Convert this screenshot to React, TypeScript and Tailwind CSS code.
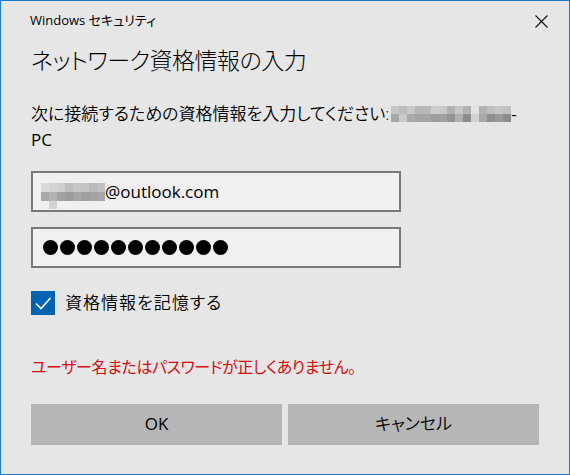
const topRow = ["#c6c6c6", "#bcbcbc", "#c8c8c8", "#b6b6b6", "#b9b9b9", "#cdcdcd", "#c9c9c9", "#b1b1b1", "#c7c7c7", "#b3b3b3", "#e2e2e2", "#b3b3b3", "#bfbfbf", "#c6c6c6", "#c1c1c1"];
const bottomRow = ["#a6a6a6", "#c9c9c9", "#a9a9a9", "#a4a4a4", "#a6a6a6", "#9d9d9d", "#a1a1a1", "#939393", "#b1b1b1", "#8b8b8b", "#d2d2d2", "#a9a9a9", "#8f8f8f", "#9b9b9b", "#8d8d8d"];

const emailTop = ["#dadada", "#d3d3d3", "#cfcfcf", "#bdbdbd", "#c6c6c6", "#c4c4c4", "#bababa", "#c2c2c2"];
const emailBottom = ["#a9a9a9", "#b4b4b4", "#a2a2a2", "#9b9b9b", "#a6a6a6", "#9e9e9e", "#a3a3a3", "#a7a7a7"];

const font = "font-['Open_Sans','Noto_Sans_CJK_JP',sans-serif] [font-feature-settings:'palt'] font-[350]";
const latin = "font-['Open_Sans',sans-serif] font-[380]";

const Blur = ({ top, bottom, w, h }: { top: string[]; bottom: string[]; w: number; h: number }) => (
  <svg width={top.length * w} height={h * 2} className="block">
    {top.map((c, i) => (
      <rect key={"t" + i} x={i * w} y={0} width={w} height={h} fill={c} />
    ))}
    {bottom.map((c, i) => (
      <rect key={"b" + i} x={i * w} y={h} width={w} height={h} fill={c} />
    ))}
  </svg>
);

export default function App() {
  return (
    <div className={`w-[570px] h-[475px] border border-[#1979ca] bg-[#e6e6e6] text-black flex flex-col ${font}`}>
      <div className="h-[40px] flex items-center justify-between pl-[29px] pr-[21px]">
        <span className="text-[13px] font-normal">Windows セキュリティ</span>
        <svg width="13" height="13" viewBox="0 0 13 13">
          <path d="M0.5 0.5 L12.5 12.5 M12.5 0.5 L0.5 12.5" stroke="#111" strokeWidth="1.1" fill="none" />
        </svg>
      </div>

      <div className="flex flex-col pl-[30px]">
        <div className="mt-[4px] h-[30px] leading-[30px] text-[23px] tracking-[-0.5px] font-light">ネットワーク資格情報の入力</div>

        <div className="mt-[26px] text-[17px] leading-[26px]">
          <div className="flex items-center">
            <span>次に接続するための資格情報を入力してください:</span>
            <span className="ml-[2px]">
              <Blur top={topRow} bottom={bottomRow} w={8} h={8} />
            </span>
            <span className={latin}>-</span>
          </div>
          <div className={latin}>PC</div>
        </div>

        <div className="mt-[18px] w-[370px] h-[41px] border-2 border-[#7a7a7a] bg-[#f0f0f0] flex items-center pl-[8px] text-[17px]">
          <div className="relative">
            <Blur top={emailTop} bottom={emailBottom} w={8} h={9} />
            <div className="absolute left-[8px] top-[18px] w-[8px] h-[8px] bg-[#d4d4d4]" />
          </div>
          <span className={latin}>@outlook.com</span>
        </div>

        <div className="mt-[15px] w-[370px] h-[41px] border-2 border-[#7a7a7a] bg-[#f0f0f0] flex items-center pl-[10px] gap-[2px]">
          {Array.from({ length: 11 }).map((_, i) => (
            <span key={i} className="w-[15px] h-[15px] rounded-full bg-black" />
          ))}
        </div>

        <div className="mt-[22px] flex items-center">
          <div className="w-[24px] h-[24px] bg-[#0063b1] flex items-center justify-center">
            <svg width="24" height="24" viewBox="0 0 24 24">
              <path d="M5 12.5 L10 17.5 L19.5 7" stroke="#fff" strokeWidth="1.6" fill="none" />
            </svg>
          </div>
          <span className="ml-[10px] text-[17px] tracking-[1px]">資格情報を記憶する</span>
        </div>

        <div className="mt-[39px] text-[16px] leading-[24px] tracking-[-0.4px] font-normal text-[#d40d12]">ユーザー名またはパスワードが正しくありません。</div>

        <div className="mt-[25px] flex gap-[6px] text-[17px]">
          <div className={`w-[251px] h-[41px] bg-[#b6b6b6] flex items-center justify-center ${latin}`}>OK</div>
          <div className="w-[251px] h-[41px] bg-[#b6b6b6] flex items-center justify-center">キャンセル</div>
        </div>
      </div>
    </div>
  );
}
